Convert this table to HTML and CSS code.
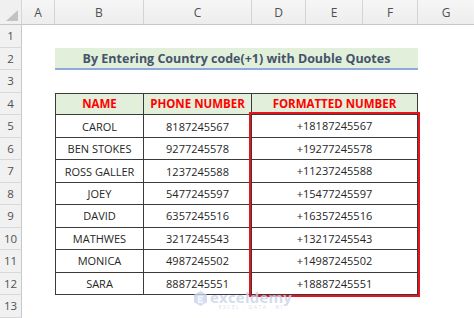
FILE: index.html
```html
<!DOCTYPE html>
<html>
<head>
<meta charset="utf-8">
<link rel="stylesheet" href="styles.css">
</head>
<body>
<div class="sheet">
  <div class="corner"><span class="tri"></span></div>
  <div class="colh">A</div>
  <div class="colh">B</div>
  <div class="colh">C</div>
  <div class="colh">D</div>
  <div class="colh">E</div>
  <div class="colh">F</div>
  <div class="colh last">G</div>

  <div class="rowh r1">1</div>
  <div class="rowh r2">2</div>
  <div class="rowh r3">3</div>
  <div class="rowh r4">4</div>
  <div class="rowh r5">5</div>
  <div class="rowh r6">6</div>
  <div class="rowh r7">7</div>
  <div class="rowh r8">8</div>
  <div class="rowh r9">9</div>
  <div class="rowh r10">10</div>
  <div class="rowh r11">11</div>
  <div class="rowh r12">12</div>
  <div class="rowh r13">13</div>

  <div class="title">By Entering Country code(+1) with Double Quotes</div>

  <div class="table">
    <div class="col c-name">
      <div class="cell head">NAME</div>
      <div class="cell">CAROL</div>
      <div class="cell">BEN STOKES</div>
      <div class="cell">ROSS GALLER</div>
      <div class="cell">JOEY</div>
      <div class="cell">DAVID</div>
      <div class="cell">MATHWES</div>
      <div class="cell">MONICA</div>
      <div class="cell">SARA</div>
    </div>
    <div class="col c-phone">
      <div class="cell head">PHONE NUMBER</div>
      <div class="cell">8187245567</div>
      <div class="cell">9277245578</div>
      <div class="cell">1237245588</div>
      <div class="cell">5477245597</div>
      <div class="cell">6357245516</div>
      <div class="cell">3217245543</div>
      <div class="cell">4987245502</div>
      <div class="cell">8887245551</div>
    </div>
    <div class="col c-fmt">
      <div class="cell head">FORMATTED NUMBER</div>
      <div class="hl">
        <div class="cell">+18187245567</div>
        <div class="cell">+19277245578</div>
        <div class="cell">+11237245588</div>
        <div class="cell">+15477245597</div>
        <div class="cell">+16357245516</div>
        <div class="cell">+13217245543</div>
        <div class="cell">+14987245502</div>
        <div class="cell">+18887245551</div>
      </div>
    </div>
  </div>

  <div class="wm">
    <svg class="wm-ico" width="13" height="15" viewBox="0 0 14 16"><path d="M7 0 L14 4 L14 12 L7 16 L0 12 L0 4 Z" fill="#c9d4ec"/><path d="M4 5 L10 5 L10 7 L6 7 L6 8 L9 8 L9 10 L6 10 L6 11 L10 11 L10 13 L4 13 Z" fill="#eef2f9"/></svg>
    <div class="wm-text">
      <div class="wm-name">exceldemy</div>
      <div class="wm-sub">EXCEL · DATA · BI</div>
    </div>
  </div>
</div>
</body>
</html>
```
FILE: styles.css
```css
html, body {
  margin: 0;
  padding: 0;
  background: #ffffff;
}
body {
  width: 474px;
  height: 318px;
  overflow: hidden;
  font-family: "Open Sans", "Liberation Sans", sans-serif;
}
.sheet {
  position: relative;
  display: grid;
  grid-template-columns: 22px 33px 89px 108px 54px 57px 55px 56px;
  grid-template-rows: 25px repeat(13, 22.5px);
  width: 474px;
}
.corner {
  grid-column: 1;
  grid-row: 1;
  background: #f0f0f0;
  border-right: 1px solid #d6d6d6;
  border-bottom: 1px solid #c6c6c6;
  box-sizing: border-box;
  position: relative;
}
.tri {
  position: absolute;
  right: 3px;
  bottom: 3px;
  width: 0;
  height: 0;
  border-left: 12px solid transparent;
  border-bottom: 11px solid #c2c2c2;
}
.colh {
  grid-row: 1;
  background: linear-gradient(#f6f6f6, #ededed);
  border-right: 1px solid #d4d4d4;
  border-bottom: 1px solid #c6c6c6;
  box-sizing: border-box;
  display: flex;
  align-items: center;
  justify-content: center;
  font-size: 12px;
  color: #505050;
}
.colh.last { border-right: none; }
.rowh {
  grid-column: 1;
  background: #f1f1f1;
  border-right: 1px solid #c8c8c8;
  border-bottom: 1px solid #d8d8d8;
  box-sizing: border-box;
  display: flex;
  align-items: center;
  justify-content: center;
  font-size: 11.5px;
  color: #505050;
}
.r1 { grid-row: 2; } .r2 { grid-row: 3; } .r3 { grid-row: 4; } .r4 { grid-row: 5; }
.r5 { grid-row: 6; } .r6 { grid-row: 7; } .r7 { grid-row: 8; } .r8 { grid-row: 9; }
.r9 { grid-row: 10; } .r10 { grid-row: 11; } .r11 { grid-row: 12; } .r12 { grid-row: 13; }
.r13 { grid-row: 14; }

.title {
  grid-column: 3 / 8;
  grid-row: 3;
  background: #e2efda;
  border-bottom: 2px solid #8ea9db;
  box-sizing: border-box;
  display: flex;
  align-items: center;
  justify-content: center;
  font-weight: 700;
  font-size: 12.5px;
  color: #44546a;
  padding-top: 1px;
}

.table {
  grid-column: 3 / 8;
  grid-row: 5 / 14;
  display: flex;
  border-left: 1px solid #3a3a3a;
  border-top: 1px solid #3a3a3a;
  box-sizing: border-box;
}
.col {
  display: flex;
  flex-direction: column;
}
.c-name { width: 88px; }
.c-phone { width: 108px; }
.c-fmt { flex: 1; }
.cell {
  height: 22.5px;
  box-sizing: border-box;
  border-right: 1px solid #3a3a3a;
  border-bottom: 1px solid #3a3a3a;
  display: flex;
  align-items: center;
  justify-content: center;
  font-size: 11px;
  color: #262626;
  white-space: nowrap;
}
.cell.head {
  height: 22px;
  background: #e2efda;
  color: #ff0000;
  font-weight: 700;
  font-size: 11.5px;
}
.hl {
  box-shadow: 0 0 0 2px #e8141b;
  position: relative;
  margin-left: -1px;
  margin-top: -1px;
  padding-left: 1px;
  padding-top: 1px;
}

.wm {
  position: absolute;
  left: 194px;
  top: 290px;
  display: flex;
  align-items: flex-start;
  gap: 3px;
  opacity: 0.8;
}
.wm-ico { margin-top: 1px; }
.wm-text { display: flex; flex-direction: column; align-items: center; }
.wm-name {
  font-size: 15px;
  font-weight: 700;
  color: #c9d4ec;
  line-height: 14px;
  letter-spacing: 0.2px;
}
.wm-sub {
  font-size: 5px;
  color: #d0d8ea;
  letter-spacing: 1.5px;
  line-height: 6px;
}
```
